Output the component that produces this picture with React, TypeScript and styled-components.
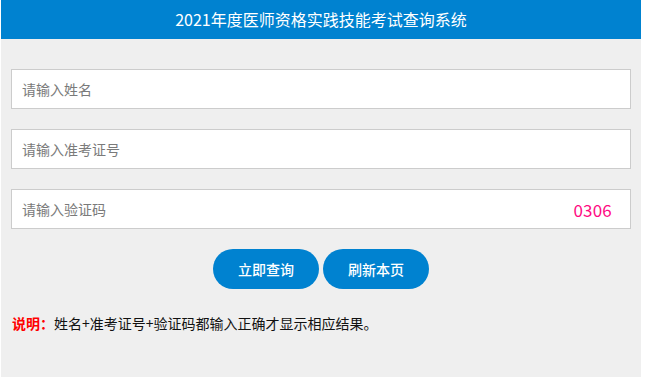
import React, {useState} from 'react';
import styled, {createGlobalStyle} from 'styled-components';

const GlobalStyle = createGlobalStyle`
  html, body {
    margin: 0;
    padding: 0;
    background: #fff;
  }
  body {
    font-family: "Noto Sans CJK SC", "Noto Sans", sans-serif;
  }
`;

const Page = styled.div`
  width: 640px;
  min-height: 100vh;
  margin-left: 1px;
  background-color: #efefef;
`;

const Header = styled.div`
  height: 39px;
  line-height: 39px;
  background-color: #0082d0;
  color: #fff;
  font-size: 16px;
  text-align: center;
`;

const Form = styled.div`
  display: flex;
  flex-direction: column;
  gap: 20px;
  padding: 30px 10px 0;
`;

const Field = styled.div`
  position: relative;
  display: flex;
  align-items: center;
  height: 40px;
  box-sizing: border-box;
  border: 1px solid #cccccc;
  background: #fff;
`;

const Input = styled.input`
  flex: 1;
  height: 100%;
  border: none;
  outline: none;
  padding: 0 10px;
  background: transparent;
  font-family: inherit;
  font-size: 14px;
  color: #333;
  &::placeholder {
    color: #7a7a7a;
  }
`;

const Code = styled.span`
  padding-right: 18px;
  font-size: 17px;
  color: #ff0a82;
  letter-spacing: 0.2px;
  user-select: none;
`;

const Buttons = styled.div`
  display: flex;
  justify-content: center;
  gap: 4px;
  padding-top: 20px;
`;

const Button = styled.button`
  width: 106px;
  height: 40px;
  border: none;
  border-radius: 20px;
  background-color: #0082d0;
  color: #fff;
  font-family: inherit;
  font-size: 14px;
  font-weight: 500;
  cursor: pointer;
`;

const Note = styled.p`
  margin: 0;
  padding: 24px 11px 0;
  font-size: 14px;
  color: #111;
  b {
    color: #ff0000;
  }
`;

const App: React.FunctionComponent = () => {
  const [code] = useState<string>('0306');

  return (
    <Page>
      <GlobalStyle/>
      <Header>2021年度医师资格实践技能考试查询系统</Header>
      <Form>
        <Field>
          <Input type="text" placeholder="请输入姓名"/>
        </Field>
        <Field>
          <Input type="text" placeholder="请输入准考证号"/>
        </Field>
        <Field>
          <Input type="text" placeholder="请输入验证码"/>
          <Code>{code}</Code>
        </Field>
      </Form>
      <Buttons>
        <Button type="button">立即查询</Button>
        <Button type="button" onClick={() => window.location.reload()}>刷新本页</Button>
      </Buttons>
      <Note><b>说明：</b>姓名+准考证号+验证码都输入正确才显示相应结果。</Note>
    </Page>
  );
};

export default App;
